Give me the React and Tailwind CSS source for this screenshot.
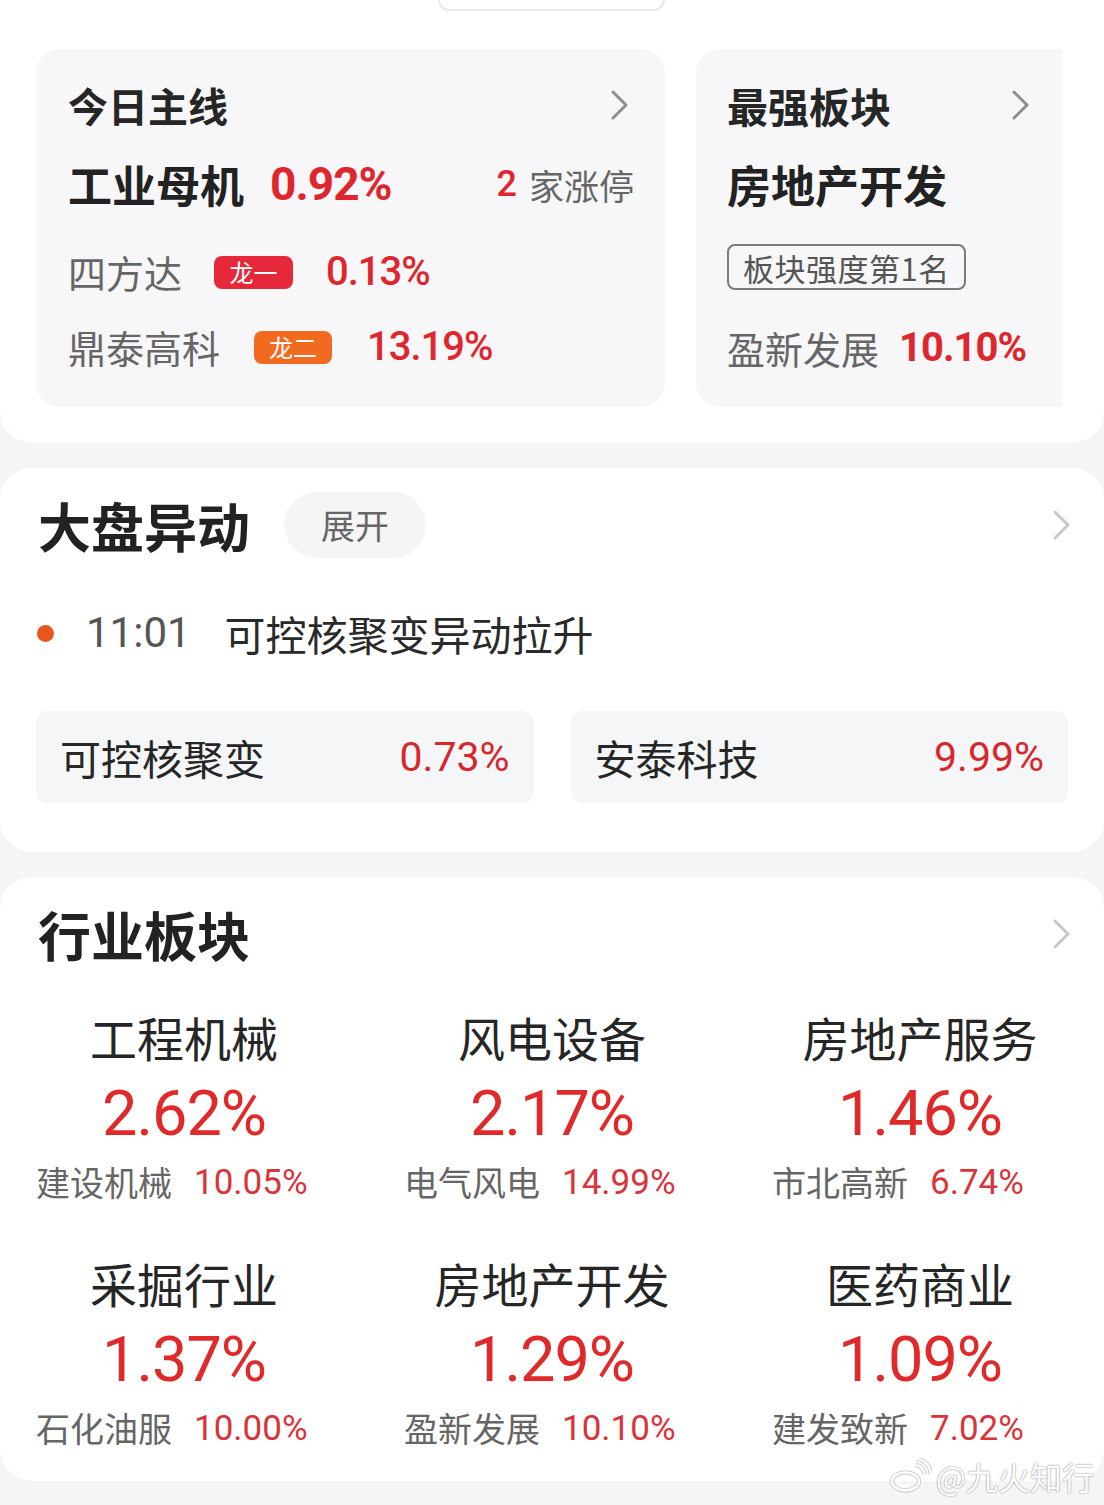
import React from "react";

const CJK = "font-['Noto_Sans_CJK_SC',sans-serif]";
const NUM = "font-['Roboto','Noto_Sans_CJK_SC',sans-serif]";

const Chevron = ({ className = "w-[20px] h-[32px]", color = "#9a9a9a" }) => (
  <svg viewBox="0 0 20 32" className={className} fill="none" aria-hidden>
    <path d="M3 3l13 13L3 29" stroke={color} strokeWidth="3" strokeLinecap="round" strokeLinejoin="round" />
  </svg>
);

const WeiboLogo = () => (
  <svg viewBox="0 0 48 40" className="w-[44px] h-[36px]" fill="none" aria-hidden>
    <g stroke="#cfcfcf" strokeWidth="5" opacity="0.9">
      <ellipse cx="19" cy="26" rx="15" ry="10" />
      <path d="M30 8a10 10 0 0 1 10 10" />
      <path d="M31 1a17 17 0 0 1 16 17" />
    </g>
    <g stroke="#ffffff" strokeWidth="2.5">
      <ellipse cx="19" cy="26" rx="15" ry="10" />
      <ellipse cx="17" cy="27" rx="6" ry="4.5" />
      <path d="M30 8a10 10 0 0 1 10 10" />
      <path d="M31 1a17 17 0 0 1 16 17" />
    </g>
  </svg>
);

const sectors = [
  { name: "工程机械", pct: "2.62%", stock: "建设机械", sp: "10.05%" },
  { name: "风电设备", pct: "2.17%", stock: "电气风电", sp: "14.99%" },
  { name: "房地产服务", pct: "1.46%", stock: "市北高新", sp: "6.74%" },
  { name: "采掘行业", pct: "1.37%", stock: "石化油服", sp: "10.00%" },
  { name: "房地产开发", pct: "1.29%", stock: "盈新发展", sp: "10.10%" },
  { name: "医药商业", pct: "1.09%", stock: "建发致新", sp: "7.02%" },
];

function SectorCell({ s, row }) {
  return (
    <div className={`flex flex-col ${row === 0 ? "mt-[41px]" : "mt-[50px]"}`}>
      <div className="h-[56px] flex items-center justify-center text-[47px] text-[#262626] leading-none">{s.name}</div>
      <div className={`mt-[13px] h-[72px] flex items-center justify-center text-[63px] text-[#e02a2a] leading-none tracking-[-1px] ${NUM}`}>{s.pct}</div>
      <div className="mt-[11px] h-[44px] flex items-center pl-[36px] text-[34px] leading-none">
        <span className="text-[#666]">{s.stock}</span>
        <span className={`ml-[22px] text-[#d9343a] text-[35px] ${NUM}`}>{s.sp}</span>
      </div>
    </div>
  );
}

export default function App() {
  return (
    <div className={`relative w-[1104px] min-h-[1505px] bg-[#f4f5f7] ${CJK}`}>
      {/* top block */}
      <div className="bg-white rounded-b-[32px] h-[443px]">
        <div className="ml-[438px] w-[227px] h-[11px] border-2 border-t-0 border-[#e9e9e9] rounded-b-[22px]" />
        <div className="mt-[38px] flex gap-[31px] pl-[36px] w-[1062px] overflow-hidden">
          {/* 今日主线 */}
          <div className="shrink-0 w-[629px] h-[358px] rounded-[24px] bg-[#f7f7f9] pl-[32px] pr-[31px] pt-[32px]">
            <div className="h-[48px] flex items-center justify-between">
              <span className="text-[40px] font-bold text-[#262626] leading-none">今日主线</span>
              <span className="mr-[4px]"><Chevron className="w-[20px] h-[32px]" color="#8e8e8e" /></span>
            </div>
            <div className="mt-[27px] h-[56px] flex items-center">
              <span className="text-[44px] font-bold text-[#222] leading-none">工业母机</span>
              <span className={`ml-[26px] text-[46px] font-bold text-[#e0262d] leading-none tracking-[-1px] ${NUM}`}>0.92%</span>
              <span className="ml-auto flex items-center leading-none">
                <span className={`text-[36px] font-medium text-[#e0262d] ${NUM}`}>2</span>
                <span className="ml-[12px] text-[35px] text-[#666]">家涨停</span>
              </span>
            </div>
            <div className="mt-[36px] h-[48px] flex items-center">
              <span className="text-[38px] text-[#666] leading-none">四方达</span>
              <span className="ml-[32px] w-[79px] h-[33px] rounded-[8px] bg-[#e5293a] text-white text-[24px] leading-none flex items-center justify-center">龙一</span>
              <span className={`ml-[33px] text-[40px] font-medium text-[#e0262d] leading-none tracking-[-1px] ${NUM}`}>0.13%</span>
            </div>
            <div className="mt-[27px] h-[48px] flex items-center">
              <span className="text-[38px] text-[#666] leading-none">鼎泰高科</span>
              <span className="ml-[34px] w-[78px] h-[33px] rounded-[8px] bg-[#f26a1f] text-white text-[24px] leading-none flex items-center justify-center">龙二</span>
              <span className={`ml-[35px] text-[40px] font-medium text-[#e0262d] leading-none tracking-[-1px] ${NUM}`}>13.19%</span>
            </div>
          </div>

          {/* 最强板块 */}
          <div className="shrink-0 w-[400px] h-[358px] rounded-[24px] bg-[#f7f7f9] pl-[31px] pt-[32px]">
            <div className="h-[48px] flex items-center w-[304px] justify-between">
              <span className="text-[41px] font-bold text-[#262626] leading-none">最强板块</span>
              <Chevron className="w-[20px] h-[32px]" color="#8e8e8e" />
            </div>
            <div className="mt-[27px] h-[56px] flex items-center">
              <span className="text-[44px] font-bold text-[#222] leading-none">房地产开发</span>
            </div>
            <div className="mt-[32px] h-[46px] flex">
              <span className="h-[46px] px-[14px] rounded-[8px] border-2 border-[#7a7a7a] text-[31px] text-[#555] leading-none flex items-center tracking-[0.5px]">板块强度第1名</span>
            </div>
            <div className="mt-[34px] h-[48px] flex items-center">
              <span className="text-[38px] text-[#666] leading-none">盈新发展</span>
              <span className={`ml-[20px] text-[40px] font-bold text-[#e0262d] leading-none tracking-[-1px] ${NUM}`}>10.10%</span>
            </div>
          </div>
        </div>
      </div>

      {/* 大盘异动 */}
      <div className="mt-[25px] bg-white rounded-[32px] h-[384px] pt-[24px] px-[36px]">
        <div className="h-[66px] flex items-center">
          <span className="ml-[2px] text-[53px] font-bold text-[#222] leading-none">大盘异动</span>
          <span className="ml-[34px] w-[142px] h-[66px] rounded-full bg-[#f5f5f7] text-[34px] text-[#666] leading-none flex items-center justify-center">展开</span>
          <span className="ml-auto mr-[-4px]"><Chevron className="w-[20px] h-[34px]" color="#c8c8c8" /></span>
        </div>
        <div className="mt-[50px] h-[50px] flex items-center">
          <span className="ml-[1px] w-[17px] h-[17px] rounded-full bg-[#e8561c]" />
          <span className={`ml-[32px] text-[42px] text-[#555] leading-none ${NUM}`}>11:01</span>
          <span className="ml-[34px] text-[41px] text-[#2a2a2a] leading-none">可控核聚变异动拉升</span>
        </div>
        <div className="mt-[53px] grid grid-cols-2 gap-[37px]">
          <div className="h-[92px] rounded-[12px] bg-[#f5f6f8] px-[24px] flex items-center justify-between">
            <span className="text-[41px] text-[#262626] leading-none">可控核聚变</span>
            <span className={`text-[41px] text-[#d9262d] leading-none ${NUM}`}>0.73%</span>
          </div>
          <div className="h-[92px] rounded-[12px] bg-[#f5f6f8] px-[24px] flex items-center justify-between">
            <span className="text-[41px] text-[#262626] leading-none">安泰科技</span>
            <span className={`text-[41px] text-[#d9262d] leading-none ${NUM}`}>9.99%</span>
          </div>
        </div>
      </div>

      {/* 行业板块 */}
      <div className="mt-[25px] bg-white rounded-[32px] h-[604px] pt-[24px]">
        <div className="h-[66px] flex items-center px-[36px]">
          <span className="ml-[2px] text-[53px] font-bold text-[#222] leading-none">行业板块</span>
          <span className="ml-auto mr-[-4px]"><Chevron className="w-[20px] h-[34px]" color="#c8c8c8" /></span>
        </div>
        <div className="grid grid-cols-3">
          {sectors.map((s, i) => (
            <SectorCell key={s.name} s={s} row={i < 3 ? 0 : 1} />
          ))}
        </div>
      </div>

      {/* watermark */}
      <div className="absolute right-[10px] top-[1458px] flex items-center gap-[4px]">
        <WeiboLogo />
        <span className="text-[32px] text-white leading-none [text-shadow:0_0_2px_#9a9a9a,0_0_1px_#9a9a9a]">@九火知行</span>
      </div>
    </div>
  );
}
